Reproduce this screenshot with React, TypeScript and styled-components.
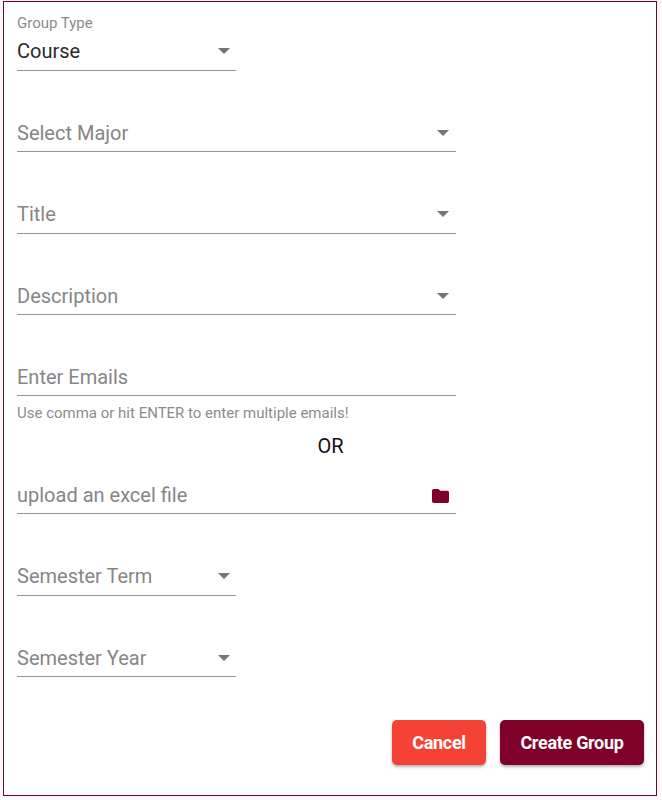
import React from "react";
import styled, { createGlobalStyle } from "styled-components";

const Global = createGlobalStyle`
  * { box-sizing: border-box; }
  html, body { margin: 0; background: #fafafa; overflow: hidden; }
  body { font-family: Roboto, "Liberation Sans", sans-serif; }
`;

const Page = styled.main`
  height: 800px;
  padding: 1px 5px 4px 3px;
`;

const Form = styled.form`
  height: 795px;
  border: 1px solid #7b0028;
  background: #fff;
  padding: 0 12px 0 13px;
  display: flex;
  flex-direction: column;
`;

const Label = styled.label`
  height: 20px;
  margin-top: 11px;
  font-size: 15px;
  line-height: 20px;
  color: #8c8c8c;
`;

const Field = styled.div<{ $narrow?: boolean; $gap: number; $filled?: boolean; $low?: boolean }>`
  width: ${(p) => (p.$narrow ? 219 : 439)}px;
  height: 38px;
  flex: none;
  margin-top: ${(p) => p.$gap}px;
  padding: ${(p) => (p.$low ? "1px" : "0")} ${(p) => (p.$narrow ? 6 : 7)}px ${(p) => (p.$low ? "0" : "1px")} 0;
  border-bottom: 1px solid #949494;
  display: flex;
  align-items: center;
  justify-content: space-between;
  font-size: 20px;
  line-height: 24px;
  color: ${(p) => (p.$filled ? "#2a2a2a" : "#868686")};
`;

const Caret = styled.span`
  border: 6px solid transparent;
  border-top-color: #757575;
  border-bottom: 0;
`;

const Hint = styled.p`
  margin: 7px 0 0;
  font-size: 15px;
  line-height: 20px;
  color: #8c8c8c;
`;

const Or = styled.div`
  margin-top: 11px;
  width: 627px;
  text-align: center;
  font-size: 20px;
  line-height: 24px;
  color: #111;
`;

const Actions = styled.div`
  display: flex;
  justify-content: flex-end;
  gap: 14px;
  margin-top: 43px;
`;

const Button = styled.button<{ $color: string; $width: number }>`
  width: ${(p) => p.$width}px;
  height: 45px;
  border: 0;
  border-radius: 5px;
  padding: 0;
  background: ${(p) => p.$color};
  color: #fff;
  font: 700 18px Roboto, sans-serif;
  letter-spacing: -0.3px;
  box-shadow: 0 2px 3px rgba(0, 0, 0, 0.3);
`;

const FolderIcon = styled.svg`
  display: block;
  margin-top: 2px;
`;

function Folder() {
  return (
    <FolderIcon width="17" height="14" viewBox="0 0 17 14">
      <path fill="#7f0029" d="M1.7 0H6.5l1.8 1.8h7A1.7 1.7 0 0 1 17 3.5v8.8a1.7 1.7 0 0 1-1.7 1.7H1.7A1.7 1.7 0 0 1 0 12.3V1.7A1.7 1.7 0 0 1 1.7 0z" />
    </FolderIcon>
  );
}

export default function App() {
  return (
    <Page>
      <Global />
      <Form>
        <Label>Group Type</Label>
        <Field $narrow $filled $gap={0}>Course<Caret /></Field>
        <Field $low $gap={43}>Select Major<Caret /></Field>
        <Field $gap={44}>Title<Caret /></Field>
        <Field $low $gap={43}>Description<Caret /></Field>
        <Field $low $gap={43}>Enter Emails</Field>
        <Hint>Use comma or hit ENTER to enter multiple emails!</Hint>
        <Or>OR</Or>
        <Field $low $gap={18}>upload an excel file<Folder /></Field>
        <Field $narrow $gap={44}>Semester Term<Caret /></Field>
        <Field $narrow $low $gap={43}>Semester Year<Caret /></Field>
        <Actions>
          <Button type="button" $color="#f44336" $width={94}>Cancel</Button>
          <Button type="button" $color="#7f0029" $width={144}>Create Group</Button>
        </Actions>
      </Form>
    </Page>
  );
}
